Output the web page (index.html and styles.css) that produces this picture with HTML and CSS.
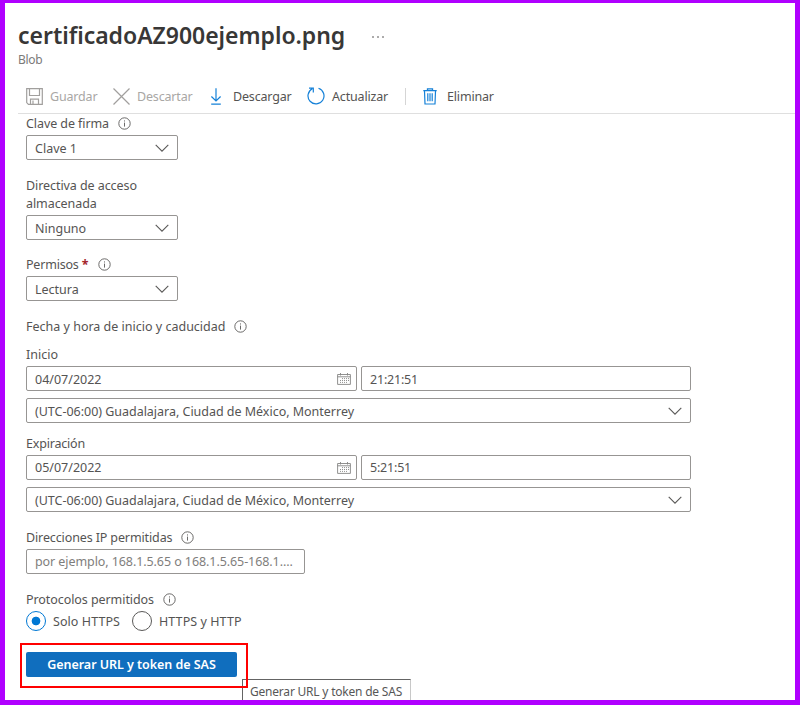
FILE: index.html
```
<!DOCTYPE html>
<html lang="es">
<head>
<meta charset="utf-8">
<title>certificadoAZ900ejemplo.png</title>
<link rel="stylesheet" href="styles.css">
</head>
<body>
<svg class="defs" aria-hidden="true">
  <symbol id="info" viewBox="0 0 13 13"><circle cx="6.5" cy="6.5" r="5.7"/><path d="M6.5 5.6V9.6M6.5 3.4V4.5"/></symbol>
  <symbol id="chevron" viewBox="0 0 14 8"><path d="M.7.8L7 7.1 13.3.8"/></symbol>
  <symbol id="calendar" viewBox="0 0 14 12"><path d="M.6 1.5H13.4V11.4H.6ZM.6 3.8H13.4M3.5 0V2.5M10.5 0V2.5"/><path stroke-dasharray="1 1" d="M5 5.6H12M3 7.5H12M3 9.4H10"/></symbol>
</svg>
<div class="frame">
  <header class="head">
    <div class="title-row"><h1>certificadoAZ900ejemplo.png</h1><svg class="more" viewBox="0 0 12 2"><path d="M0 1H2M5 1H7M10 1H12"/></svg></div>
    <div class="subtitle">Blob</div>
  </header>
  <nav class="toolbar">
    <div class="cmd off save"><svg viewBox="0 0 17 17"><path d="M.7.7H16.3V16.3H2.4L.7 14.6ZM3.5.7V7.5H13.5V.7M4.5 16V11.2H12.5V16M7 12.5V16"/></svg><span>Guardar</span></div>
    <div class="cmd off discard"><svg viewBox="0 0 17 17"><path d="M.5.5L16.5 16.5M16.5.5L.5 16.5"/></svg><span>Descartar</span></div>
    <div class="cmd download"><svg viewBox="0 0 12 17"><path d="M6 .3V12.7M1.4 8.5L6 13 10.6 8.5M1.2 16.2H10.8"/></svg><span>Descargar</span></div>
    <div class="cmd refresh"><svg viewBox="0 0 18 18"><path d="M11.5 1.3A8 8 0 1 1 5.3 1.8M2 1.2H6.3V5.4"/></svg><span>Actualizar</span></div>
    <div class="sep"></div>
    <div class="cmd delete"><svg viewBox="0 0 14 17"><path class="lid" d="M.3 2.7H13.7M4.5 2.2V.8H9.5V2.2"/><path d="M1.5 3L2 16H12L12.5 3"/><path class="bars" d="M4.8 5.2V13.3M7 5.2V13.3M9.2 5.2V13.3"/></svg><span>Eliminar</span></div>
  </nav>
  <main class="form">
    <div class="label key"><span>Clave de firma</span><svg class="info"><use href="#info"/></svg></div>
    <div class="box small low"><span>Clave 1</span><svg class="chev"><use href="#chevron"/></svg></div>
    <div class="label policy"><span>Directiva de acceso<br>almacenada</span></div>
    <div class="box small low"><span>Ninguno</span><svg class="chev"><use href="#chevron"/></svg></div>
    <div class="label perms"><span>Permisos <b>*</b></span><svg class="info"><use href="#info"/></svg></div>
    <div class="box small low"><span>Lectura</span><svg class="chev"><use href="#chevron"/></svg></div>
    <div class="label dates"><span>Fecha y hora de inicio y caducidad</span><svg class="info"><use href="#info"/></svg></div>
    <div class="label start"><span>Inicio</span></div>
    <div class="pair">
      <div class="box low"><span>04/07/2022</span><svg class="cal"><use href="#calendar"/></svg></div>
      <div class="box low"><span class="time">21:21:51</span></div>
    </div>
    <div class="box zone low"><span>(UTC-06:00) Guadalajara, Ciudad de México, Monterrey</span><svg class="chev"><use href="#chevron"/></svg></div>
    <div class="label end"><span>Expiración</span></div>
    <div class="pair">
      <div class="box"><span>05/07/2022</span><svg class="cal"><use href="#calendar"/></svg></div>
      <div class="box"><span class="time">5:21:51</span></div>
    </div>
    <div class="box zone low"><span>(UTC-06:00) Guadalajara, Ciudad de México, Monterrey</span><svg class="chev"><use href="#chevron"/></svg></div>
    <div class="label ips"><span>Direcciones IP permitidas</span><svg class="info"><use href="#info"/></svg></div>
    <div class="box ip"><span>por ejemplo, 168.1.5.65 o 168.1.5.65-168.1....</span></div>
    <div class="label protocols"><span>Protocolos permitidos</span><svg class="info"><use href="#info"/></svg></div>
    <div class="radios">
      <div class="radio on"><i></i><span>Solo HTTPS</span></div>
      <div class="radio"><i></i><span>HTTPS y HTTP</span></div>
    </div>
    <div class="action">
      <div class="button"><span>Generar URL y token de SAS</span></div>
      <div class="tooltip"><span>Generar URL y token de SAS</span></div>
      <div class="highlight"></div>
    </div>
  </main>
</div>
</body>
</html>
```
FILE: styles.css
```
* { box-sizing: border-box; }
body { margin: 0; background: #fff; font: 12.5px/18px "Noto Sans", "Open Sans", sans-serif; color: #555453; }
svg { fill: none; stroke: #5a5958; flex: none; display: block; }
span { white-space: nowrap; }
.defs { position: absolute; width: 0; height: 0; }
.frame { width: 800px; height: 705px; border: solid #b000ff; border-width: 3px 5px 5px; overflow: hidden; }
.head { height: 77px; padding: 15px 0 0 13px; }
.title-row { display: flex; height: 34px; align-items: center; }
h1 { margin: 0; width: 327px; font: 600 23px/34px "Noto Sans", sans-serif; letter-spacing: -.03px; color: #383736; white-space: nowrap; }
.more { width: 12px; height: 2px; margin: 4px 0 0 27px; }
.subtitle { font-size: 12px; line-height: 18px; margin-top: -1px; letter-spacing: -.3px; color: #7b7a79; }
.toolbar { display: flex; align-items: center; height: 34px; margin-left: 13px; padding-left: 8px; border-bottom: 1px solid #dfdfdf; }
.cmd { display: flex; align-items: center; height: 20px; letter-spacing: -.17px; }
.cmd svg { stroke: #1581d8; stroke-width: 1.2; margin-top: -1px; }
.cmd.off { color: #a9a7a5; }
.cmd.off svg { stroke: #a19f9d; }
.save { width: 87px; }
.save svg { width: 17px; height: 17px; margin-right: 7px; }
.discard { width: 97px; }
.discard svg { width: 17px; height: 17px; margin-right: 7px; }
.download { width: 97px; }
.download svg { width: 12px; height: 17px; margin-right: 11px; }
.refresh { width: 98px; }
.refresh svg { width: 18px; height: 18px; margin-right: 7px; }
.sep { width: 1px; height: 17px; background: #d5d5d5; }
.delete { margin-left: 17px; }
.delete svg { width: 14px; height: 17px; margin-right: 10px; }
.delete .lid { stroke-width: 1.3; }
.form { padding-left: 21px; }
.label { display: flex; align-items: center; height: 18px; }
.label b { color: #a4262c; }
.info { width: 13px; height: 13px; margin: -1px 0 0 8px; stroke-width: .9; }
.box { display: flex; align-items: center; justify-content: space-between; width: 665px; height: 25px; padding: 0 8px; border: 1px solid #979593; border-radius: 2px; }
.box.low span { position: relative; top: 1px; }
.box.small { width: 152px; }
.chev { width: 14px; height: 8px; stroke-width: 1.1; }
.cal { width: 14px; height: 12px; stroke: #858483; margin-right: -3px; stroke-width: .9; }
.key { height: 20px; margin-bottom: 1px; letter-spacing: -.08px; }
.key .info { margin-left: 9px; }
.policy { height: 36px; margin: 17px 0 2px; letter-spacing: -.07px; }
.perms { margin: 16px 0 2px; letter-spacing: -.2px; }
.perms .info { margin-left: 10px; }
.dates { margin-top: 17px; }
.dates .info { margin-left: 9px; }
.start { margin: 10px 0 2px; }
.pair { display: grid; grid-template-columns: 331px 330px; gap: 4px; }
.pair .box { width: auto; }
.time { letter-spacing: -.2px; }
.zone { margin-top: 7px; letter-spacing: -.02px; }
.end { margin: 12px 0 2px; letter-spacing: -.2px; }
.ips { margin: 17px 0 2px; letter-spacing: -.12px; }
.ips .info, .protocols .info { margin-left: 9px; }
.box.ip { width: 279px; color: #7f7e7c; letter-spacing: -.08px; }
.protocols { margin-top: 17px; letter-spacing: -.07px; }
.radios { display: flex; height: 23px; align-items: center; gap: 12px; }
.radio { display: flex; align-items: center; gap: 7px; letter-spacing: .07px; }
.radio span { position: relative; top: 1px; }
.radio i { width: 20px; height: 20px; border: 1px solid #5a5958; border-radius: 50%; }
.radio.on i { border-color: #0078d4; background: radial-gradient(circle, #0078d4 4px, transparent 4.7px); }
.action { position: relative; margin-top: 20px; }
.button { width: 211px; height: 25px; border-radius: 2px; background: #106ebe; color: #fff; font-weight: 600; letter-spacing: -.04px; display: flex; align-items: center; justify-content: center; }
.highlight { position: absolute; left: -6px; top: -9px; width: 228px; height: 45px; border: 2px solid #f00; }
.tooltip { position: absolute; left: 216px; top: 27px; width: 169px; height: 26px; padding: 3px 7px; border: 1px solid #646464; border-right-color: #c8c8c8; background: #fff; font-size: 12px; letter-spacing: -.21px; color: #575757; }
```
